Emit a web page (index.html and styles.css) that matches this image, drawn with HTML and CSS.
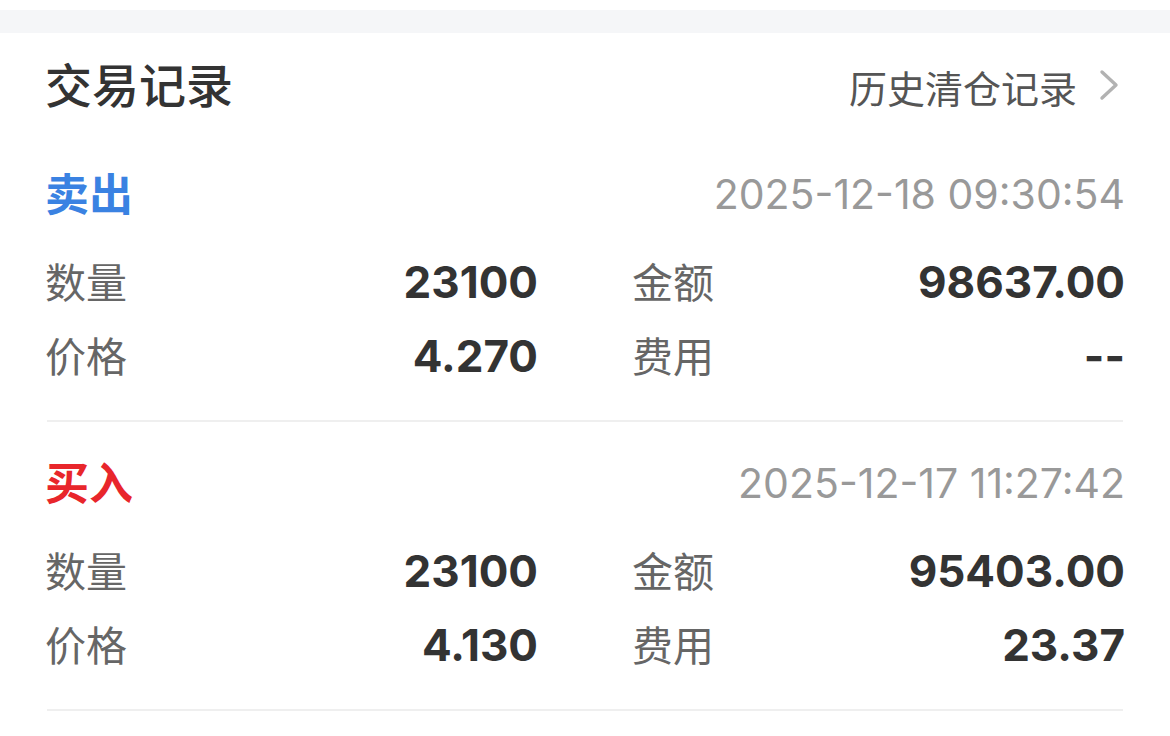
FILE: index.html
```html
<!DOCTYPE html>
<html lang="zh-CN">
<head>
    <meta charset="UTF-8">
    <meta name="viewport" content="width=device-width, initial-scale=1.0">
    <title>交易记录</title>
    <link rel="stylesheet" href="styles.css">
</head>
<body>
    <div class="topbar"></div>
    <div class="card">
        <div class="header">
            <h2 class="title">交易记录</h2>
            <a class="history" href="#">历史清仓记录
                <svg class="chevron" width="20" height="32" viewBox="0 0 20 32"><path d="M3 3 L17 16 L3 29" fill="none" stroke="#b2b2b2" stroke-width="3.4" stroke-linecap="round" stroke-linejoin="round"/></svg>
            </a>
        </div>

        <!-- sell -->
        <div class="record">
            <div class="record-head">
                <span class="type sell">卖出</span>
                <span class="time">2025-12-18 09:30:54</span>
            </div>
            <div class="fields">
                <div class="field"><span class="label">数量</span><span class="value">23100</span></div>
                <div class="field"><span class="label">金额</span><span class="value">98637.00</span></div>
                <div class="field"><span class="label">价格</span><span class="value">4.270</span></div>
                <div class="field"><span class="label">费用</span><span class="value">--</span></div>
            </div>
        </div>

        <!-- buy -->
        <div class="record">
            <div class="record-head">
                <span class="type buy">买入</span>
                <span class="time">2025-12-17 11:27:42</span>
            </div>
            <div class="fields">
                <div class="field"><span class="label">数量</span><span class="value">23100</span></div>
                <div class="field"><span class="label">金额</span><span class="value">95403.00</span></div>
                <div class="field"><span class="label">价格</span><span class="value">4.130</span></div>
                <div class="field"><span class="label">费用</span><span class="value">23.37</span></div>
            </div>
        </div>
    </div>
</body>
</html>
```

FILE: styles.css
```css
body { margin: 0; background-color: #ffffff; font-family: Inter, "Noto Sans CJK SC", sans-serif; color: #333; }
.topbar { margin-top: 10px; height: 23px; background-color: #f5f6f8; }
.card { padding: 0 47px; }
.header { display: flex; justify-content: space-between; align-items: center; padding-top: 25px; height: 56px; }
.title { margin: 0 0 0 -2px; font-size: 47px; font-weight: 500; line-height: 56px; color: #333; }
.history { display: flex; align-items: center; gap: 22px; font-size: 38px; color: #555; text-decoration: none; margin-right: 4px; }
.chevron { display: block; margin-top: -3px; }
.record { border-bottom: 2px solid #efefef; padding-top: 55px; padding-bottom: 27px; }
.record + .record { padding-top: 36px; }
.record-head { display: flex; justify-content: space-between; align-items: center; height: 50px; margin: 0 -2px; }
.type { font-size: 44px; font-weight: 700; line-height: 50px; margin-top: 2px; }
.sell { color: #3a82e2; }
.buy { color: #e8262b; }
.time { font-size: 41px; color: #999; line-height: 50px; }
.fields { display: grid; grid-template-columns: 1fr 1fr; column-gap: 94px; margin: 26px -2px 0; }
.field { display: flex; justify-content: space-between; align-items: baseline; height: 74px; line-height: 74px; }
.label { font-size: 41px; color: #666; }
.value { font-size: 44px; font-weight: 700; color: #333; }
```
